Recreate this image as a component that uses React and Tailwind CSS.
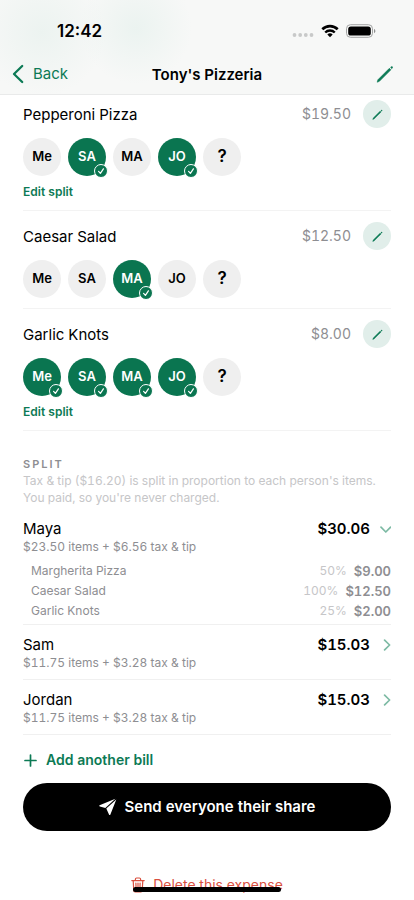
import { useState } from 'react'
import clsx from 'clsx'

const PEOPLE = ['Me', 'SA', 'MA', 'JO', '?']

const ITEMS = [
    { name: 'Pepperoni Pizza', price: '$19.50', selected: ['SA', 'JO'] },
    { name: 'Caesar Salad', price: '$12.50', selected: ['MA'] },
    { name: 'Garlic Knots', price: '$8.00', selected: ['Me', 'SA', 'MA', 'JO'] },
]

const SHARES = [
    {
        name: 'Maya',
        total: '$30.06',
        detail: '$23.50 items + $6.56 tax & tip',
        lines: [
            { name: 'Margherita Pizza', percent: '50%', amount: '$9.00' },
            { name: 'Caesar Salad', percent: '100%', amount: '$12.50' },
            { name: 'Garlic Knots', percent: '25%', amount: '$2.00' },
        ],
    },
    { name: 'Sam', total: '$15.03', detail: '$11.75 items + $3.28 tax & tip', lines: [] },
    { name: 'Jordan', total: '$15.03', detail: '$11.75 items + $3.28 tax & tip', lines: [] },
]

function PencilIcon({ className }) {
    return (
        <svg viewBox="0 0 18 18" className={className} fill="currentColor" aria-hidden="true">
            <path d="M1.2 17.2l.7-2.4L13.4 3.3l1.5 1.5L3.4 16.3z" stroke="currentColor" strokeWidth=".6" />
            <path d="M14.3 2.4l.8-.8a1 1 0 0 1 1.4 0l.1.1a1 1 0 0 1 0 1.4l-.8.8z" />
        </svg>
    )
}

function StatusBar() {
    return (
        <div className="flex h-[54px] items-center justify-between pt-2 pr-[38px] pl-[57px]">
            <span className="text-[17px] leading-5 font-semibold">12:42</span>
            <div className="flex items-center gap-[7px]">
                <svg viewBox="0 0 22 14" className="h-3.5 w-[22px]" fill="#c8c9c9" aria-hidden="true">
                    <circle cx="2.5" cy="11" r="1.9" />
                    <circle cx="8.2" cy="11" r="1.9" />
                    <circle cx="13.8" cy="11" r="1.9" />
                    <circle cx="19.5" cy="11" r="1.9" />
                </svg>
                <svg viewBox="0 0 18 14" className="h-3.5 w-[18px]" aria-hidden="true">
                    <path d="M1.3 5.3a11 11 0 0 1 15.4 0" fill="none" stroke="#000" strokeWidth="2.6" />
                    <path d="M4.2 8.5a6.9 6.9 0 0 1 9.6 0" fill="none" stroke="#000" strokeWidth="2.4" />
                    <path d="M9 13.3l-2.7-2.7a3.9 3.9 0 0 1 5.4 0z" />
                </svg>
                <svg viewBox="0 0 30 14" className="h-3.5 w-[30px]" aria-hidden="true">
                    <rect x=".5" y=".7" width="26" height="12.6" rx="4" fill="none" stroke="#a3a4a4" />
                    <rect x="2.2" y="2.4" width="22.6" height="9.2" rx="2.6" />
                    <path d="M28 5v4.2c.8-.3 1.4-1.2 1.4-2.1S28.8 5.3 28 5z" fill="#8f9090" />
                </svg>
            </div>
        </div>
    )
}

function Header() {
    return (
        <header className="sticky top-0 z-10 border-b border-[#e9eaea] bg-[#f7f8f7] bg-[radial-gradient(circle_at_42px_32px,#ecf3f0,transparent_64px),radial-gradient(circle_at_136px_28px,#ebf3f0,transparent_56px)]">
            <StatusBar />
            <div className="grid h-10 grid-cols-[1fr_auto_1fr] items-center px-3">
                <button type="button" className="flex items-center gap-[9px] text-[15px] leading-5 text-[#0c7a55]">
                    <svg viewBox="0 0 12 20" className="h-5 w-3" fill="none" stroke="currentColor" strokeWidth="2.3" strokeLinecap="round" strokeLinejoin="round" aria-hidden="true">
                        <path d="M10.2 2L2 10l8.2 8" />
                    </svg>
                    Back
                </button>
                <h1 className="pt-0.5 text-[15px] leading-5 font-semibold">Tony's Pizzeria</h1>
                <button type="button" aria-label="Edit expense" className="mr-2 justify-self-end text-[#0c7a55]">
                    <PencilIcon className="size-[18px]" />
                </button>
            </div>
        </header>
    )
}

function Avatar({ label, selected, onToggle }) {
    return (
        <button
            type="button"
            aria-pressed={selected}
            onClick={onToggle}
            className={clsx(
                'relative flex size-[38px] items-center justify-center rounded-full font-semibold',
                label === '?' ? 'text-[17px]' : 'text-[13px]',
                selected ? 'bg-[#0a7550] text-white' : 'bg-[#efefef] text-black'
            )}
        >
            {label}
            {selected && (
                <span className="absolute -right-0.5 -bottom-0.5 flex size-3.5 items-center justify-center rounded-full border border-white bg-[#0a7550]">
                    <svg viewBox="0 0 12 12" className="size-3" fill="none" stroke="#fff" strokeWidth="1.2" strokeLinecap="round" strokeLinejoin="round" aria-hidden="true">
                        <path d="M3.6 6.4l1.8 2 3-4.6" />
                    </svg>
                </span>
            )}
        </button>
    )
}

function BillItem({ item }) {
    const [selected, setSelected] = useState(item.selected)

    const toggle = (person) => {
        setSelected((prev) => (prev.includes(person) ? prev.filter((p) => p !== person) : [...prev, person]))
    }

    return (
        <li className="border-b border-[#f3f3f3] pt-[11px] pb-2.5 first:pt-[5px]">
            <div className="flex h-7 items-center">
                <h2 className="flex-1 pt-0.5 text-[15px] leading-5">{item.name}</h2>
                <span className="mr-3 text-sm leading-5 text-[#8e8e92]">{item.price}</span>
                <button type="button" aria-label={`Edit ${item.name}`} className="flex size-7 items-center justify-center rounded-full bg-[#e1eeea] text-[#0c7a55]">
                    <PencilIcon className="size-[11px]" />
                </button>
            </div>
            <div className="mt-2.5 flex gap-[7px]">
                {PEOPLE.map((person) => (
                    <Avatar key={person} label={person} selected={selected.includes(person)} onToggle={() => toggle(person)} />
                ))}
            </div>
            {selected.length > 1 && (
                <button type="button" className="mt-2 block text-xs leading-4 font-semibold text-[#0c7a55]">
                    Edit split
                </button>
            )}
        </li>
    )
}

function ShareRow({ share }) {
    const open = share.lines.length > 0

    return (
        <li className="border-b border-[#f0f0f0]">
            <button type="button" aria-expanded={open} className={clsx('block w-full pt-2.5 text-left', !open && 'pb-2')}>
                <span className="flex h-5 items-center">
                    <span className="flex-1 text-[15px] leading-5">{share.name}</span>
                    <span className="text-[15px] leading-5 font-semibold">{share.total}</span>
                    <svg viewBox="0 0 12 12" className="ml-[9px] size-3" fill="none" stroke="#7dbaa4" strokeWidth="1.7" strokeLinecap="round" strokeLinejoin="round" aria-hidden="true">
                        <path d={open ? 'M2 4.2l4.8 4.8 4.8-4.8' : 'M5.6 1.2l5 4.8-5 4.8'} />
                    </svg>
                </span>
                <span className="block text-xs leading-4 text-[#8e8e92]">{share.detail}</span>
            </button>
            {open && (
                <ul className="pt-1.5 pb-[3px] pl-2 text-xs leading-5 text-[#8e8e92]">
                    {share.lines.map((line) => (
                        <li key={line.name} className="flex h-5 gap-[7px]">
                            <span className="flex-1">{line.name}</span>
                            <span className="text-[#c6c6c8]">{line.percent}</span>
                            <span className="text-[13px] font-semibold">{line.amount}</span>
                        </li>
                    ))}
                </ul>
            )}
        </li>
    )
}

export default function App() {
    return (
        <div className="min-h-screen bg-white font-['Inter',sans-serif] text-black">
            <Header />

            <main className="px-[23px] pb-1 tabular-nums">
                {/* Items */}
                <ul>
                    {ITEMS.map((item) => (
                        <BillItem key={item.name} item={item} />
                    ))}
                </ul>

                {/* Split */}
                <section>
                    <h2 className="mt-[25px] text-[11px] leading-4 font-semibold tracking-[2px] text-[#8e8e92]">SPLIT</h2>
                    <p className="mb-[3px] text-xs leading-[17px] text-[#c6c6c8]">
                        Tax & tip ($16.20) is split in proportion to each person's items.
                        <br />
                        You paid, so you're never charged.
                    </p>
                    <ul>
                        {SHARES.map((share) => (
                            <ShareRow key={share.name} share={share} />
                        ))}
                    </ul>
                </section>

                {/* Actions */}
                <button type="button" className="mt-[15px] flex items-center gap-2 text-sm leading-5 font-semibold text-[#0c7a55]">
                    <svg viewBox="0 0 15 15" className="size-[15px]" fill="none" stroke="currentColor" strokeWidth="1.7" strokeLinecap="round" aria-hidden="true">
                        <path d="M7.5 2v11M2 7.5h11" />
                    </svg>
                    Add another bill
                </button>
                <button type="button" className="mt-[13px] flex h-12 w-full items-center justify-center gap-2 rounded-full bg-black text-[15px] leading-5 font-semibold text-white">
                    <svg viewBox="0 0 18 18" className="size-[18px]" fill="currentColor" aria-hidden="true">
                        <path d="M.6 7.3L16.4.7 6.3 9.9.9 8.5c-.7-.2-.8-.9-.3-1.2z" />
                        <path d="M17.3 1.5L11.4 16.5c-.3.7-1.2.7-1.4 0L7.3 10.6z" />
                    </svg>
                    Send everyone their share
                </button>
                <button type="button" className="mx-auto mt-11 flex items-center gap-2 text-sm leading-5 text-[#d9503f]">
                    <svg viewBox="0 0 14 16" className="h-4 w-3.5" fill="none" stroke="currentColor" strokeWidth="1.2" strokeLinecap="round" strokeLinejoin="round" aria-hidden="true">
                        <path d="M.8 3.6h12.4M4.4 3.4V2.2c0-.7.5-1.2 1.2-1.2h2.8c.7 0 1.2.5 1.2 1.2v1.2M2.2 3.8l.6 9.8c0 .8.6 1.4 1.4 1.4h5.6c.8 0 1.4-.6 1.4-1.4l.6-9.8M4.9 6l.2 6.8M7 6v6.8M9.1 6l-.2 6.8" />
                    </svg>
                    Delete this expense
                </button>
            </main>

            {/* Home indicator */}
            <div className="fixed bottom-2 left-1/2 z-20 h-[5px] w-[148px] -translate-x-1/2 rounded-full bg-black" />
        </div>
    )
}
